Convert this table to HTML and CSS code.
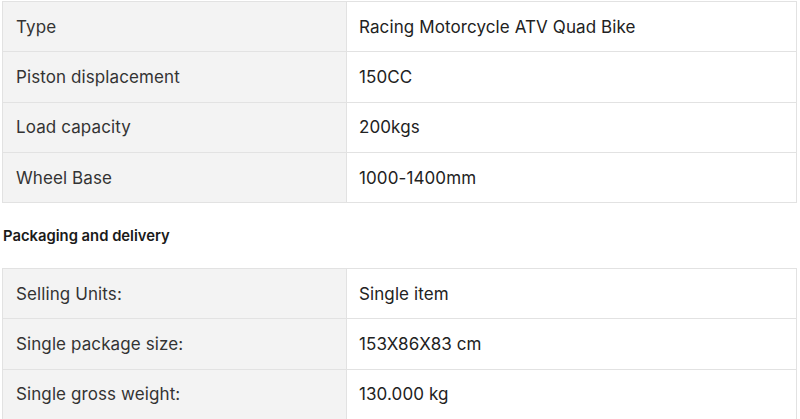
FILE: index.html
```html
<!DOCTYPE html>
<html lang="en">
<head>
<meta charset="utf-8">
<title>Product attributes</title>
<link rel="stylesheet" href="styles.css">
</head>
<body>
<div class="page">
  <table class="attrs">
    <tbody>
      <tr><td class="label">Type</td><td class="value">Racing Motorcycle ATV Quad Bike</td></tr>
      <tr><td class="label">Piston displacement</td><td class="value">150CC</td></tr>
      <tr><td class="label">Load capacity</td><td class="value">200kgs</td></tr>
      <tr><td class="label">Wheel Base</td><td class="value">1000-1400mm</td></tr>
    </tbody>
  </table>
  <h3 class="section-title">Packaging and delivery</h3>
  <table class="attrs">
    <tbody>
      <tr><td class="label">Selling Units:</td><td class="value">Single item</td></tr>
      <tr><td class="label">Single package size:</td><td class="value">153X86X83 cm</td></tr>
      <tr><td class="label">Single gross weight:</td><td class="value">130.000 kg</td></tr>
    </tbody>
  </table>
</div>
</body>
</html>
```
FILE: styles.css
```css
html, body {
  margin: 0;
  padding: 0;
  background: #fff;
}
body {
  font-family: Inter, "Noto Sans", "Liberation Sans", sans-serif;
  color: #222;
  overflow: hidden;
}
.page {
  padding: 1px 3px 0 2px;
}
.attrs {
  width: 795px;
  border-collapse: collapse;
  table-layout: fixed;
  font-size: 17px;
  line-height: 20px;
  letter-spacing: 0.1px;
}
.attrs td {
  border: 1px solid #e2e2e2;
  height: 50.3px;
  box-sizing: border-box;
  padding: 0 13px;
  vertical-align: middle;
}
.attrs .label {
  width: 344px;
  background: #f3f3f3;
  color: #333;
}
.attrs .value {
  color: #222;
  padding-left: 12px;
}
.section-title {
  margin: 23px 0 22px 1px;
  font-size: 14.8px;
  line-height: 20px;
  font-weight: 600;
  color: #1a1a1a;
}
```
